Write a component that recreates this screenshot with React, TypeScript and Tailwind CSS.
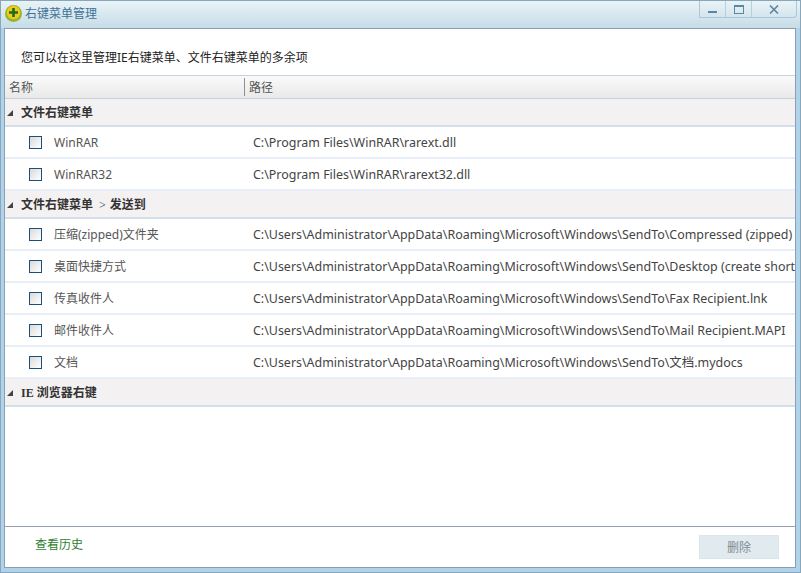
import React from 'react';

const font = '[font-family:"Noto_Sans","Noto_Sans_CJK_SC",sans-serif]';

const Group: React.FC<{ children: React.ReactNode }> = ({ children }) => (
  <div className="h-[28px] flex items-center bg-[#f3f1f2] border-b-2 border-[#d3e0ec] shrink-0">
    <svg width="6" height="6" viewBox="0 0 6 6" className="ml-[2px] mt-[2px] shrink-0">
      <path d="M6 0V6H0Z" fill="#444" />
    </svg>
    <span className='ml-[8px] mt-[2px] text-[12px] font-bold text-[#333] [font-family:"Liberation_Serif","Noto_Sans_CJK_SC",serif] whitespace-pre'>{children}</span>
  </div>
);

const Row: React.FC<{ name: string; path: string }> = ({ name, path }) => (
  <div className="h-[32px] flex items-center border-b-2 border-[#e8effa] shrink-0 whitespace-nowrap">
    <div className="w-[13px] h-[13px] ml-[24px] border border-[#1c4f80] bg-gradient-to-br from-[#d8dad8] to-white shrink-0" />
    <span className="ml-[12px] w-[199px] pt-[2px] shrink-0 text-[12px] text-[#555]">{name}</span>
    <span className="pt-[2px] shrink-0 text-[12.45px] text-[#444]">{path}</span>
  </div>
);

export default function App() {
  return (
    <div className={`w-[801px] h-[573px] flex flex-col overflow-hidden border border-[#8aa6ba] bg-[#aed3ea] ${font}`}>
      <div className="h-[27px] flex items-start justify-between bg-gradient-to-b from-[#e9f3f7] to-[#c6dce8] shrink-0">
        <div className="flex items-center h-[24px] pl-[4px]">
          <svg width="17" height="17" viewBox="0 0 17 17">
            <circle cx="8.5" cy="8.5" r="8.5" fill="#8fb82a" />
            <circle cx="8.5" cy="7.5" r="6.8" fill="#f2c81e" />
            <path d="M8.5 3v9M4 7.5h9" stroke="#1f6b1f" strokeWidth="2.6" />
          </svg>
          <span className="ml-[3px] pt-[2px] text-[12px] text-[#3f7396]">右键菜单管理</span>
        </div>
        <div className="flex h-[17px] mr-[3px] border border-t-0 border-[#a9c8d9] rounded-br-[4px]">
          <div className="w-[26px] flex items-center justify-center border-r border-[#b5d0de]">
            <div className="w-[9px] h-[2px] mt-[5px] bg-[#5d86a3]" />
          </div>
          <div className="w-[26px] flex items-start justify-center border-r border-[#b5d0de]">
            <div className="w-[10px] h-[9px] mt-[4px] border border-t-2 border-[#5d86a3]" />
          </div>
          <div className="w-[44px] flex items-center justify-center">
            <svg width="10" height="9" viewBox="0 0 10 9">
              <path d="M1 .5l8 8M9 .5l-8 8" stroke="#5d86a3" strokeWidth="1.6" />
            </svg>
          </div>
        </div>
      </div>

      <div className="flex-1 ml-[3px] mr-[4px] mb-[4px] border border-[#8d9fae] bg-white flex flex-col min-h-0 overflow-hidden">
        <div className="h-[46px] pt-[20px] pl-[16px] text-[12px] leading-[18px] text-[#222] shrink-0">
          您可以在这里管理IE右键菜单、文件右键菜单的多余项
        </div>
        <div className="h-[24px] flex items-center border-t border-b border-[#c6d3df] bg-gradient-to-b from-[#fafafa] to-[#e9e9e9] text-[12px] text-[#555] shrink-0">
          <span className="pl-[4px] pt-[2px] w-[239px]">名称</span>
          <span className="w-px h-[18px] bg-[#8f8f8f]" />
          <span className="pl-[4px] pt-[2px]">路径</span>
        </div>
        <Group>文件右键菜单</Group>
        <Row name="WinRAR" path="C:\Program Files\WinRAR\rarext.dll" />
        <Row name="WinRAR32" path="C:\Program Files\WinRAR\rarext32.dll" />
        <Group>
          文件右键菜单<span className="ml-[6px] mr-[4px] font-normal">&gt;</span>发送到
        </Group>
        <Row name="压缩(zipped)文件夹" path="C:\Users\Administrator\AppData\Roaming\Microsoft\Windows\SendTo\Compressed (zipped) Folder.ZFSendToTarget" />
        <Row name="桌面快捷方式" path="C:\Users\Administrator\AppData\Roaming\Microsoft\Windows\SendTo\Desktop (create shortcut).DeskLink" />
        <Row name="传真收件人" path="C:\Users\Administrator\AppData\Roaming\Microsoft\Windows\SendTo\Fax Recipient.lnk" />
        <Row name="邮件收件人" path="C:\Users\Administrator\AppData\Roaming\Microsoft\Windows\SendTo\Mail Recipient.MAPI" />
        <Row name="文档" path="C:\Users\Administrator\AppData\Roaming\Microsoft\Windows\SendTo\文档.mydocs" />
        <Group>IE 浏览器右键</Group>
        <div className="flex-1" />
        <div className="h-[41px] border-t border-[#95a0b0] flex items-start justify-between shrink-0">
          <span className="ml-[30px] mt-[9px] text-[12px] text-[#2e8030]">查看历史</span>
          <div className="w-[80px] h-[24px] mt-[8px] mr-[16px] pt-[2px] flex items-center justify-center bg-[#e1eaee] border border-[#d9e6ec] text-[12px] text-[#7d8a94]">
            删除
          </div>
        </div>
      </div>
    </div>
  );
}
